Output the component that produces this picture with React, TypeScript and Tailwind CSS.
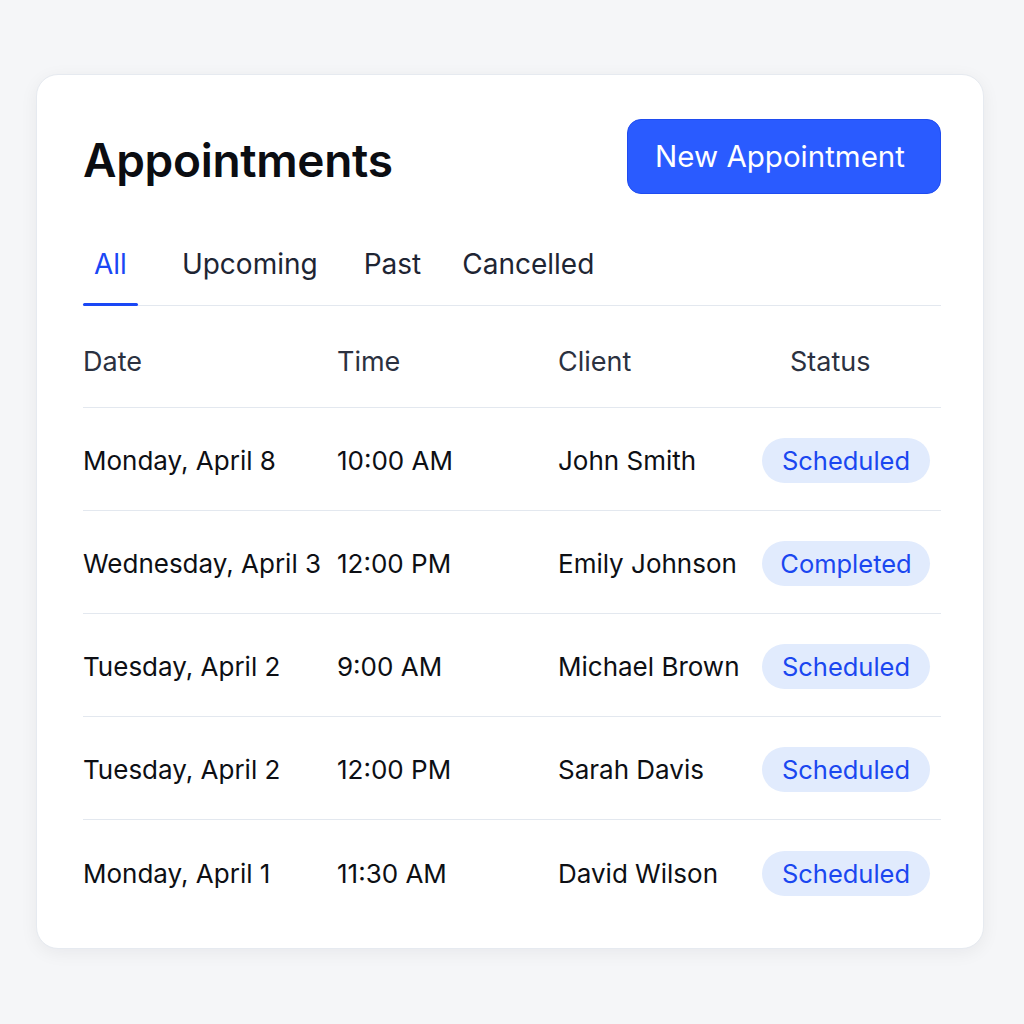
const tabs = [
  { label: "All", cls: "relative px-[11px] mr-[44px] text-[#1a47f5]" },
  { label: "Upcoming", cls: "mr-[46px] text-[#1e2533]" },
  { label: "Past", cls: "mr-[41px] text-[#1e2533]" },
  { label: "Cancelled", cls: "text-[#1e2533]" },
];

type Row = { date: string; time: string; client: string; status: string };

const rows: Row[] = [
  { date: "Monday, April 8", time: "10:00 AM", client: "John Smith", status: "Scheduled" },
  { date: "Wednesday, April 3", time: "12:00 PM", client: "Emily Johnson", status: "Completed" },
  { date: "Tuesday, April 2", time: "9:00 AM", client: "Michael Brown", status: "Scheduled" },
  { date: "Tuesday, April 2", time: "12:00 PM", client: "Sarah Davis", status: "Scheduled" },
  { date: "Monday, April 1", time: "11:30 AM", client: "David Wilson", status: "Scheduled" },
];

const cols = "grid grid-cols-[254px_221px_204px_1fr] items-center";

export default function App() {
  return (
    <div className="min-h-screen w-full bg-[#f5f6f8] pt-[74px] px-[36px] font-['Inter',sans-serif]">
      <div className="w-[948px] h-[875px] bg-white rounded-[22px] border border-[#e6eaf0] shadow-[0_4px_18px_rgba(15,23,42,0.06)] pl-[46px] pr-[42px] pt-[44px]">
        <div className="flex items-center justify-between">
          <h1 className="text-[46px] font-semibold text-[#0b0d12] tracking-[-0.3px] leading-none mt-[6px]">
            Appointments
          </h1>
          <button className="w-[314px] h-[75px] pr-[8px] rounded-[14px] bg-[#2a5bff] border border-[#1f4cf0] text-white text-[29.5px] leading-none">
            New Appointment
          </button>
        </div>

        <div className="mt-[53px] flex border-b border-[#e3e8ef] text-[28px] leading-[34px]">
          {tabs.map((t, i) => (
            <div key={t.label} className={`pb-[24px] ${t.cls}`}>
              {t.label}
              {i === 0 && (
                <div className="absolute left-0 right-0 -bottom-[1px] h-[3px] bg-[#1a47f5] rounded-full" />
              )}
            </div>
          ))}
        </div>

        <div className={`${cols} h-[102px] pt-[12px] border-b border-[#e3e8ef] text-[27px] text-[#2b3140]`}>
          <div>Date</div>
          <div>Time</div>
          <div>Client</div>
          <div className="pl-[28px]">Status</div>
        </div>

        {rows.map((r, i) => (
          <div
            key={i}
            className={`${cols} h-[103px] pt-[3px] text-[26px] text-[#0d0f14] ${
              i < rows.length - 1 ? "border-b border-[#e3e8ef]" : ""
            }`}
          >
            <div className="whitespace-nowrap">{r.date}</div>
            <div>{r.time}</div>
            <div className="whitespace-nowrap">{r.client}</div>
            <div>
              <span className="inline-flex items-center justify-center w-[168px] h-[45px] pt-[2px] rounded-full bg-[#e1ebfd] text-[#1a47f0] text-[25.5px]">
                {r.status}
              </span>
            </div>
          </div>
        ))}
      </div>
    </div>
  );
}
